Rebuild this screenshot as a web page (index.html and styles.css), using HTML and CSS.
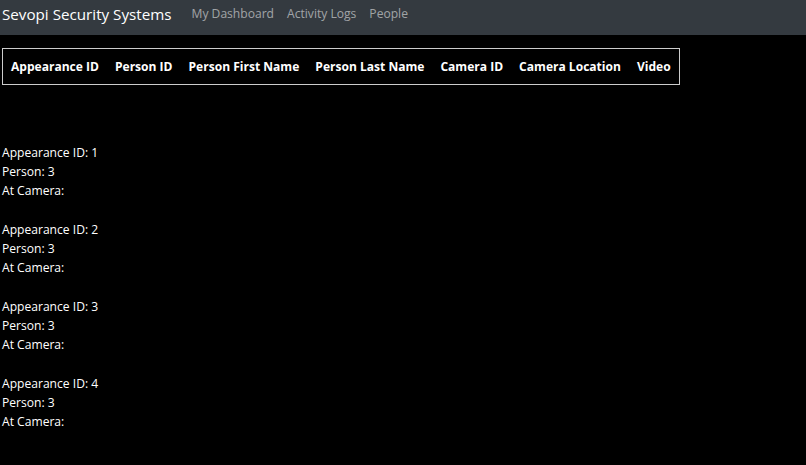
FILE: index.html
```html
<!DOCTYPE html>
<html>
<head>
<meta charset="utf-8">
<link rel="stylesheet" href="styles.css">
</head>
<body>
<nav class="navbar">
  <span class="brand">Sevopi Security Systems</span>
  <a class="nav-link" href="#">My Dashboard</a>
  <a class="nav-link" href="#">Activity Logs</a>
  <a class="nav-link" href="#">People</a>
</nav>
<main class="content">
  <table class="grid">
    <thead>
      <tr>
        <th>Appearance ID</th>
        <th>Person ID</th>
        <th>Person First Name</th>
        <th>Person Last Name</th>
        <th>Camera ID</th>
        <th>Camera Location</th>
        <th>Video</th>
      </tr>
    </thead>
  </table>
  <div class="list">
    <div class="item">
      <div>Appearance ID: 1</div>
      <div>Person: 3</div>
      <div>At Camera:</div>
    </div>
    <div class="item">
      <div>Appearance ID: 2</div>
      <div>Person: 3</div>
      <div>At Camera:</div>
    </div>
    <div class="item">
      <div>Appearance ID: 3</div>
      <div>Person: 3</div>
      <div>At Camera:</div>
    </div>
    <div class="item">
      <div>Appearance ID: 4</div>
      <div>Person: 3</div>
      <div>At Camera:</div>
    </div>
  </div>
</main>
</body>
</html>
```

FILE: styles.css
```css
html, body {
  margin: 0;
  padding: 0;
  background: #000;
  color: #fff;
  font-family: "Open Sans", "Noto Sans", sans-serif;
  font-size: 12.1px;
}
.navbar {
  background: #343a40;
  height: 35px;
  display: flex;
  align-items: center;
  padding: 0 2px;
  box-sizing: border-box;
}
.brand {
  font-size: 15.2px;
  color: #fff;
  margin-right: 20px;
  padding-bottom: 8px;
}
.nav-link {
  color: rgba(255,255,255,0.55);
  text-decoration: none;
  font-size: 12.1px;
  margin-right: 13px;
  padding-bottom: 8px;
}
.content {
  padding: 13px 2px 0;
}
.grid {
  border: 1px solid #ccc;
  border-collapse: collapse;
}
.grid th {
  font-weight: 700;
  font-size: 12.05px;
  padding: 9px 8px;
  text-align: left;
  white-space: nowrap;
}
.list {
  margin-top: 58px;
}
.item {
  line-height: 19px;
  margin-bottom: 20px;
}
```
